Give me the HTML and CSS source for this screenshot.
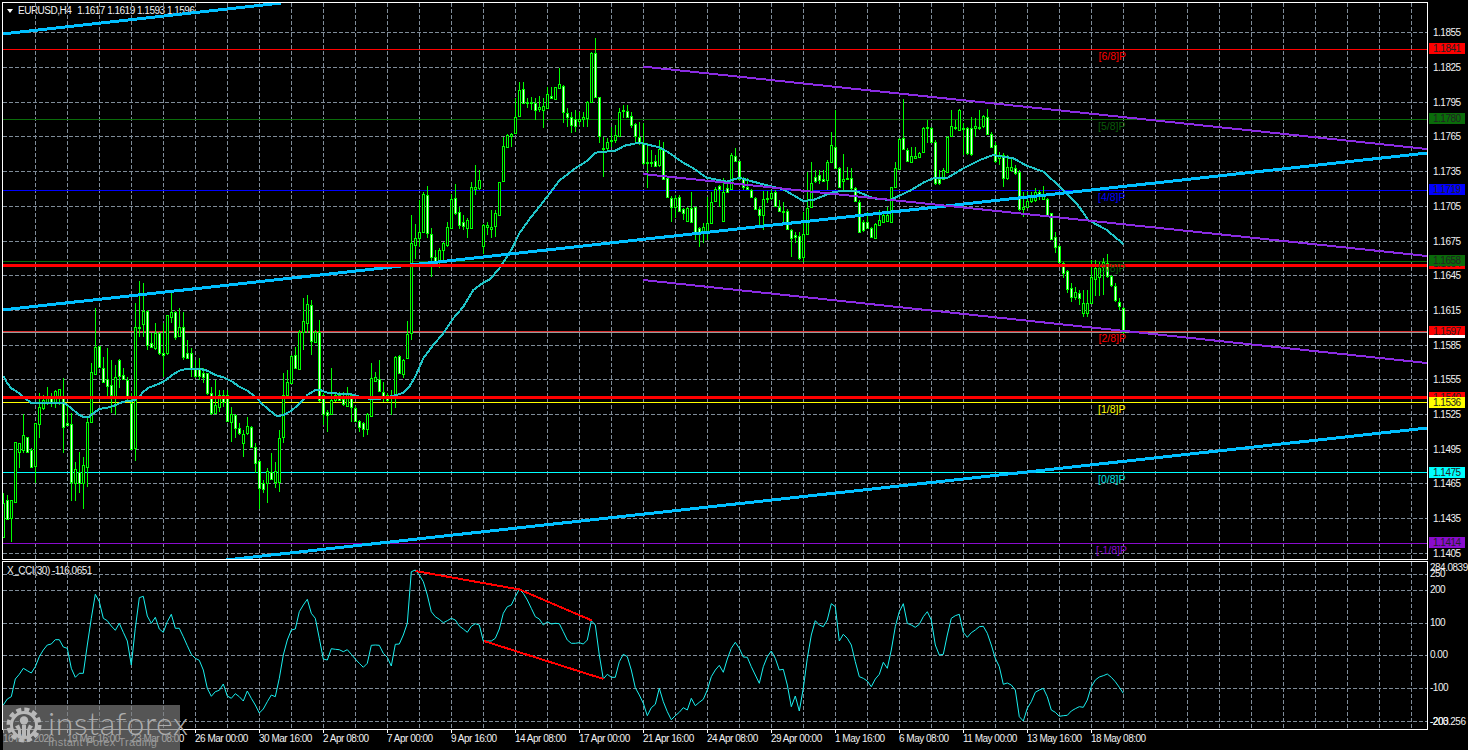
FILE: index.html
```html
<!DOCTYPE html>
<html lang="en">
<head>
<meta charset="utf-8">
<title>EURUSD,H4</title>
<link rel="stylesheet" href="styles.css">
</head>
<body>
<main class="terminal">
  <section class="pane pane-main">
    <div class="plot">
      <div class="caption caption-main"><span class="caret"></span><span>EURUSD,H4</span><span class="ohlc">1.1617 1.1619 1.1593 1.1596</span></div>
      <svg id="price-plot" class="chart" width="1424" height="556" viewBox="3 3 1424 556"></svg>
    </div>
    <div id="price-axis" class="axis"></div>
  </section>
  <section class="pane pane-sub">
    <div class="plot">
      <div class="caption caption-sub">X_CCI(30) -116.0651</div>
      <svg id="cci-plot" class="chart" width="1424" height="167" viewBox="3 562 1424 167"></svg>
    </div>
    <div id="cci-axis" class="axis"></div>
  </section>
  <footer class="time-axis">
    <span>16 Mar 2026</span><span>19 Mar 16:00</span><span>23 Mar 08:00</span><span>26 Mar 00:00</span><span>30 Mar 16:00</span><span>2 Apr 08:00</span><span>7 Apr 00:00</span><span>9 Apr 16:00</span><span>14 Apr 08:00</span><span>17 Apr 00:00</span><span>21 Apr 16:00</span><span>24 Apr 08:00</span><span>29 Apr 00:00</span><span>1 May 16:00</span><span>6 May 08:00</span><span>11 May 00:00</span><span>13 May 16:00</span><span>18 May 08:00</span>
  </footer>
</main>
<aside class="brand">
  <svg class="brand-mark" width="36" height="36" viewBox="0 0 36 36">
    <circle class="gear-teeth" cx="18" cy="18" r="15.5"/>
    <circle class="gear-ring" cx="18" cy="18" r="12.5"/>
    <circle class="gear-core" cx="18" cy="13.5" r="4.2"/>
    <path class="gear-core" d="M16 18h4v13h-4zM9 19.5l4-2 2 5v8h-3v-7zM27 19.5l-4-2-2 5v8h3v-7z"/>
  </svg>
  <div class="brand-text">
    <div class="brand-name">instaforex</div>
    <div class="brand-tag">Instant Forex Trading</div>
  </div>
</aside>
<script src="chart.js"></script>
</body>
</html>
```
FILE: styles.css
```css
* { box-sizing: border-box; }
html, body { margin: 0; height: 100%; }
body {
  position: relative;
  width: 1468px;
  height: 750px;
  overflow: hidden;
  background: #000;
  color: #fff;
  font-family: "Liberation Sans", Arial, sans-serif;
  font-size: 10px;
  letter-spacing: -0.5px;
}
.terminal { display: flex; flex-direction: column; padding: 2px 0 0 2px; }
.pane { display: flex; }
.pane-main { height: 558px; margin-bottom: 1px; }
.pane-sub { height: 169px; }
.plot { position: relative; width: 1426px; border: 1px solid #fff; }
.chart { position: relative; display: block; }
.axis { position: relative; width: 40px; }
.caption { position: absolute; white-space: nowrap; line-height: 12px; color: #f2f2f2; }
.caption-main { left: 3px; top: 2px; display: flex; align-items: center; }
.caption-sub { left: 4px; top: 3px; }
.caret { width: 0; height: 0; margin: 0 5px 0 1px; border-left: 3.5px solid transparent; border-right: 3.5px solid transparent; border-top: 4px solid #fff; }
.ohlc { margin-left: 6px; }
.grid { stroke: #7f8c99; stroke-width: 1; stroke-dasharray: 4 2; }
.level { stroke-width: 1; fill: none; }
.wick { stroke: #00ff00; stroke-width: 1; fill: none; }
.bull { fill: #000; stroke: #00ff00; stroke-width: 1; }
.bear { fill: #e8ffe8; stroke: #00ff00; stroke-width: 1; }
.ma { fill: none; stroke: #20c4c8; stroke-width: 2; }
.trend { fill: none; stroke: #00bfff; stroke-width: 3; }
.channel { fill: none; stroke: #8a2be2; stroke-width: 2; }
.support { stroke: #ff0000; stroke-width: 3; }
.cci { fill: none; stroke: #19f0f0; stroke-width: 1; }
.pattern { fill: none; stroke: #ff0000; stroke-width: 2; }
.mm-label { font-size: 10.5px; letter-spacing: 0; font-family: "Liberation Sans", Arial, sans-serif; }
.tick, .tag { position: absolute; white-space: nowrap; line-height: 12px; }
.tick { left: 5px; color: #f2f2f2; }
.tick-sub { left: 2px; }
.tag { left: 1px; width: 36px; height: 11px; padding-left: 4px; line-height: 11px; color: #222; }
.tag-under { border-bottom: 3px solid #fff; height: 12px; }
.time-axis { display: grid; grid-template-columns: repeat(18, 64px); padding: 2px 0 0 1px; height: 20px; }
.time-axis span { position: relative; padding-top: 1px; line-height: 12px; white-space: nowrap; color: #f2f2f2; }
.time-axis span::before { content: ""; position: absolute; left: 0; top: -2px; width: 1px; height: 3px; background: #fff; }
.brand { position: absolute; left: 3px; top: 705px; width: 177px; height: 45px; display: flex; background: rgba(125, 125, 125, 0.68); }
.brand-mark { flex: none; margin: 2px 0 0 3px; }
.gear-teeth { fill: none; stroke: #b9b9b9; stroke-width: 4; stroke-dasharray: 5 3.1; }
.gear-ring { fill: none; stroke: #b9b9b9; stroke-width: 3; }
.gear-core { fill: #b9b9b9; }
.brand-text { margin-left: 6px; letter-spacing: 0; }
.brand-name { font-family: Lato, "Liberation Sans", sans-serif; font-size: 32px; line-height: 30px; margin-top: 3px; color: #adadad; letter-spacing: 0.6px; font-weight: 300; }
.brand-tag { font-family: "Liberation Sans", Arial, sans-serif; font-size: 11px; line-height: 12px; margin-top: -2px; color: #999; letter-spacing: .25px; white-space: nowrap; }
```
FILE: chart.js
```js
(function () {
  var NS = 'http://www.w3.org/2000/svg';
  function el(parent, name, attrs, text) {
    var n = document.createElementNS(NS, name);
    for (var k in attrs) n.setAttribute(k, attrs[k]);
    if (text) n.textContent = text;
    parent.appendChild(n);
    return n;
  }
  var crisp = 'crispEdges';
  var main = document.getElementById('price-plot');
  var sub = document.getElementById('cci-plot');

  function grid(svg, ys, top, bottom) {
    var d = '';
    for (var i = 0; i < 44; i++) { var x = 35.5 + 32 * i; d += 'M' + x + ' ' + top + 'V' + bottom; }
    ys.forEach(function (y) { d += 'M3 ' + (y + 0.5) + 'H1427'; });
    el(svg, 'path', { 'class': 'grid', d: d, 'shape-rendering': crisp });
  }
  var priceGrid = [32, 67, 102, 136, 171, 206, 241, 275, 310, 345, 379, 414, 449, 483, 518, 553];
  grid(main, priceGrid, 3, 559);
  grid(sub, [574, 590, 623, 655, 688, 721], 562, 729);

  /* Murrey levels */
  [[49, '#ff0000'], [119, '#0a6b0a'], [190, '#0000ff'], [261, '#0a6b0a'], [331, '#d83030'], [332, '#9a9a9a'], [402, '#ffff00'], [472, '#00ffff'], [543, '#8a0ccf']].forEach(function (l) {
    el(main, 'path', { 'class': 'level', d: 'M3 ' + (l[0] + 0.5) + 'H1427', stroke: l[1], 'shape-rendering': crisp });
  });

  /* candles: body top, body bottom, high, low, 1 = bearish; in zoom units */
  var A = [[668,770,640,773,0],[660,717,645,720,1],[660,715,660,785,0],[487,665,485,670,0],[490,515,490,565,0],[466,510,403,520,0],[470,515,470,515,1],[510,560,505,565,1],[430,557,430,610,0],[382,433,340,475,0],[360,385,345,390,0],[348,365,322,375,0],[355,365,340,380,1],[332,365,330,385,0],[328,350,328,375,0],[355,440,295,520,1],[430,435,375,437,1],[433,605,400,662,1],[568,608,545,662,0],[575,610,515,640,1],[556,610,530,687,0],[427,560,410,620,0],[277,425,250,430,0],[202,282,85,285,0],[198,262,198,265,1],[265,307,230,310,1],[298,318,205,350,1],[316,345,240,400,1],[290,350,255,405,0],[240,287,238,325,1],[286,298,265,300,1],[300,355,290,360,1],[370,507,340,510,1],[142,505,70,542,0],[140,142,3,170,0],[92,133,8,170,0],[93,195,90,210,1],[190,200,160,205,1],[158,204,130,210,0],[158,220,155,225,1],[218,225,130,290,1],[105,220,105,225,0],[96,110,40,130,0],[95,172,92,180,1],[142,167,85,170,0],[140,232,95,240,1],[218,235,180,238,1],[220,265,205,290,1],[265,287,240,295,1],[268,288,235,300,1],[278,290,265,310,1],[280,340,278,345,1],[338,400,320,405,1],[376,398,300,400,0],[345,380,330,395,0],[345,365,330,380,1],[345,422,330,425,1],[403,425,380,485,0],[405,445,402,475,1],[443,458,430,465,1],[462,488,450,530,0],[438,460,410,465,0],[442,500,438,505,1],[502,550,488,580,1],[544,625,540,687,1],[610,628,600,640,1],[574,608,565,670,0],[577,597,520,600,1],[573,605,545,625,0],[475,605,450,635,0],[346,472,280,488,0],[307,345,270,348,0],[228,310,225,312,0],[226,263,200,265,1],[155,268,150,270,0],[123,155,55,210,0],[72,130,45,160,0],[75,182,60,225,1],[155,185,150,190,0],[155,360,120,365,1],[345,402,340,435,1],[397,404,390,455,1],[360,402,265,405,0],[345,360,340,365,0],[345,360,335,362,1],[358,372,335,378,1],[340,378,320,382,0],[345,380,338,425,1],[383,423,378,427,1],[423,440,420,455,1],[428,447,425,470,1],[403,447,400,465,0],[295,408,250,410,0],[292,302,275,305,0],[298,332,240,335,1],[335,347,305,365,1],[345,360,340,365,1],[346,352,330,405,0],[232,345,228,385,0],[228,278,225,280,1],[240,282,238,295,0],[162,235,122,238,0],[-111,160,-195,180,0]];
  var B = [[715,735,672,778,0],[697,713,600,740,0],[583,695,575,700,0],[585,698,558,713,1],[703,770,685,830,1],[772,782,750,790,1],[750,780,745,805,0],[730,750,725,790,0],[682,735,665,740,0],[598,685,583,688,0],[595,640,553,645,1],[637,675,620,688,1],[665,678,645,690,1],[660,685,655,713,0],[562,683,547,688,0],[562,567,495,585,0],[540,565,510,570,0],[676,738,672,762,0],[675,682,665,705,0]];
  var C = [[590,596,540,625,0],[548,587,540,620,0],[457,555,455,558,0],[347,452,320,455,0],[315,350,312,352,0],[313,318,310,350,0],[260,310,205,312,0],[180,258,155,262,0],[178,218,155,222,1],[215,218,205,235,0],[215,218,200,240,0],[220,240,205,270,1],[232,236,198,245,0],[228,240,205,293,0],[193,235,170,238,0],[197,203,170,205,1],[172,207,170,210,0],[162,175,115,178,0],[168,245,165,280,1],[248,262,235,290,1],[260,285,245,310,1],[268,287,240,305,1],[268,272,245,285,0],[260,268,245,290,0],[215,263,212,292,0],[70,215,65,220,0],[70,200,25,205,1],[202,317,200,338,1],[355,358,320,442,0],[337,355,325,365,0],[330,332,290,350,0],[316,330,285,340,0],[247,318,235,322,0],[240,244,225,265,0],[243,262,225,265,1],[257,285,245,295,1],[283,318,278,335,1],[320,338,275,345,1],[338,400,278,405,1],[395,397,340,475,0],[395,397,360,410,0],[392,407,375,412,1],[358,405,330,410,0],[358,447,335,450,1],[445,502,440,505,1],[505,530,498,575,1],[505,530,495,565,0],[502,542,495,545,1],[538,548,535,570,1],[535,572,530,575,0],[535,575,487,578,1],[532,607,530,630,1],[595,605,592,650,1],[592,605,580,640,0],[580,607,500,630,0],[515,578,485,582,0],[478,512,470,515,0],[467,478,465,530,1],[487,572,445,575,0],[475,487,460,490,1],[375,478,370,480,0],[378,392,355,395,1],[394,447,392,450,1],[447,472,440,480,1],[470,477,445,480,1],[480,502,478,505,1],[505,537,500,540,1],[537,554,530,585,1],[508,555,482,600,0],[505,508,482,520,0],[490,505,480,510,0],[487,527,480,530,1],[530,542,510,545,1],[542,545,515,575,0],[542,598,538,600,1],[601,625,598,680,1],[616,622,605,640,1],[618,685,605,690,1],[613,682,545,695,0],[533,612,425,615,0],[458,530,395,533,0],[440,452,420,460,1],[436,450,420,462,1],[448,452,420,455,1],[395,450,390,480,0],[346,395,305,398,0],[350,413,240,416,1],[415,472,410,475,1],[448,452,372,480,0],[443,448,410,450,1],[445,475,415,480,1],[473,512,470,515,1],[515,605,510,610,1],[577,600,570,605,1],[575,593,545,595,1],[595,622,590,625,1],[583,625,578,628,0],[570,585,540,588,0],[555,575,550,578,0],[555,573,530,576,0],[472,575,470,580,0],[415,470,395,472,0],[328,417,325,420,0],[325,358,208,360,1],[360,392,355,395,1],[378,395,352,398,0],[378,385,350,388,0],[370,382,365,385,0],[293,365,290,368,0],[290,293,270,340,0],[293,337,290,340,1],[335,460,330,465,1],[447,460,420,465,1],[420,447,415,450,0],[322,425,318,430,0],[287,318,240,320,0],[290,295,270,300,1],[241,300,238,302,0],[295,298,280,375,1],[295,370,292,375,1],[295,373,260,378,1],[287,293,265,320,0],[290,292,240,300,1]];
  var D = [[347,378,345,385,0],[352,403,328,405,1],[402,442,395,445,1],[435,482,425,490,1],[467,475,455,495,0],[465,535,460,560,1],[500,535,465,540,0],[502,510,470,515,0],[505,518,495,525,1],[515,628,510,632,1],[622,628,575,650,0],[603,622,575,625,0],[590,603,575,610,0],[575,600,565,605,0],[575,585,570,600,1],[582,597,558,600,0],[598,645,595,650,1],[640,717,638,720,1],[712,742,695,760,1],[738,787,735,790,1],[790,818,785,835,1],[812,868,810,880,1],[865,890,850,905,1],[875,892,860,900,0],[880,895,870,915,1],[908,940,870,950,0],[910,938,870,952,0],[830,908,780,910,0],[803,838,780,888,0],[803,830,785,888,0],[786,800,775,885,0],[790,828,762,835,1],[828,855,825,860,1],[858,900,850,905,1],[905,918,895,930,1],[925,995,920,1000,1]];

  var wicks = '', bull = '', bear = '', k = 0;
  function addBlock(rows, y0) {
    rows.forEach(function (r) {
      var cx = 3.5 + 4 * k;
      var t = Math.round(y0 + r[0] / 3), b = Math.round(y0 + r[1] / 3);
      var h = Math.round(y0 + r[2] / 3), l = Math.round(y0 + r[3] / 3);
      if (b < t + 1) b = t + 1;
      wicks += 'M' + cx + ' ' + h + 'V' + l;
      var body = 'M' + (cx - 1) + ' ' + (t + 0.5) + 'H' + (cx + 1) + 'V' + (b + 0.5) + 'H' + (cx - 1) + 'Z';
      if (r[4]) bear += body; else bull += body;
      k++;
    });
  }
  addBlock(A, 280); addBlock(B, 0); addBlock(C, 30); addBlock(D, 0);
  el(main, 'path', { 'class': 'wick', d: wicks, 'shape-rendering': crisp });
  el(main, 'path', { 'class': 'bull', d: bull, 'shape-rendering': crisp });
  el(main, 'path', { 'class': 'bear', d: bear, 'shape-rendering': crisp });

  function conv(pts, x0, y0) {
    return pts.map(function (p) { return (x0 + p[0] / 3).toFixed(1) + ',' + (y0 + p[1] / 3).toFixed(1); });
  }
  var ma = conv([[10,287],[22,310],[34,325],[46,332],[58,340],[70,350],[82,360],[94,369],[118,370],[142,369],[166,369],[190,369],[202,375],[214,385],[226,395],[238,405],[250,411],[268,410],[280,400],[298,387],[322,383],[346,376],[370,365],[394,362],[406,360],[418,350],[430,335],[446,323],[470,314],[490,305],[514,287],[538,272],[562,266],[598,266],[622,272],[646,285],[670,292],[694,303],[718,320],[742,332],[766,350],[790,375],[814,395],[830,408],[850,406],[874,392],[898,372],[922,345],[946,330],[960,330],[982,338],[1018,341],[1054,343],[1078,350],[1114,358],[1140,356],[1186,346],[1210,338],[1228,320],[1246,290],[1270,235],[1300,195],[1330,160],[1360,115],[1390,80],[1420,30],[1450,8]], 0, 280)
    .concat(conv([[0,748],[28,715],[64,660],[88,610],[124,560],[160,515],[208,452],[256,415],[292,392],[316,368],[376,362],[404,347],[448,338],[508,352],[532,365],[580,398],[610,415],[650,443],[710,455],[748,443],[790,455],[820,463],[880,478],[940,513],[970,510],[1024,488],[1060,482],[1096,482],[1150,505],[1200,510],[1260,482],[1300,458],[1330,445],[1370,445],[1420,415],[1470,390]], 490, 30))
    .concat(conv([[0,480],[40,465],[100,475],[140,497],[190,515],[240,560],[290,610],[325,660],[380,690],[430,732]], 980, 0));
  el(main, 'polyline', { 'class': 'ma', points: ma.join(' '), 'shape-rendering': crisp });

  [[2, 34, 281, 3], [2, 310, 1427, 153], [226, 560, 1427, 428]].forEach(function (s) {
    el(main, 'line', { 'class': 'trend', x1: s[0], y1: s[1], x2: s[2], y2: s[3], 'shape-rendering': crisp });
  });
  [[643, 66.6, 1427, 149], [643, 174, 1427, 256], [643, 280, 1427, 363]].forEach(function (s) {
    el(main, 'line', { 'class': 'channel', x1: s[0], y1: s[1], x2: s[2], y2: s[3], 'shape-rendering': crisp });
  });
  [265, 397].forEach(function (y) {
    el(main, 'line', { 'class': 'support', x1: 3, y1: y + 0.5, x2: 1427, y2: y + 0.5, 'shape-rendering': crisp });
  });

  [['[6/8]P', 1098.5, 60, '#ff0000'], ['[5/8]P', 1098, 130, '#0a5c0a'], ['[4/8]P', 1098, 201, '#0000ff'], ['[3/8]P', 1098, 272, '#0a5c0a'], ['[2/8]P', 1098.5, 342, '#ff0000'], ['[1/8]P', 1098, 413, '#ffff00'], ['[0/8]P', 1098, 483, '#00e0e0'], ['[-1/8]P', 1096, 554, '#8a0ccf']].forEach(function (m) {
    el(main, 'text', { 'class': 'mm-label', x: m[1], y: m[2], fill: m[3] }, m[0]);
  });

  /* indicator pane */
  var cci = conv([[10,450],[22,432],[34,425],[46,372],[58,358],[70,340],[82,347],[94,354],[106,335],[118,305],[130,285],[142,270],[154,267],[166,254],[178,254],[190,276],[202,280],[214,340],[226,367],[238,355],[250,355],[262,270],[274,190],[286,118],[298,140],[310,190],[322,197],[334,213],[346,226],[358,205],[370,232],[382,258],[394,330],[406,220],[418,128],[430,124],[442,183],[454,205],[466,187],[478,222],[490,232],[502,200],[514,178],[526,220],[538,220],[550,245],[562,272],[574,298],[586,310],[598,316],[610,345],[622,400],[634,424],[646,410],[658,406],[670,387],[682,423],[694,430],[706,416],[718,425],[730,438],[742,408],[754,430],[766,450],[778,474],[790,462],[802,440],[814,420],[826,425],[838,370],[850,300],[862,255],[874,225],[886,222],[898,170],[910,150],[922,133],[934,175],[946,190],[958,250],[970,312],[982,315],[994,281],[1006,283],[1018,284],[1030,290],[1042,284],[1054,298],[1066,312],[1078,325],[1090,337],[1102,325],[1114,271],[1126,270],[1138,271],[1150,295],[1162,307],[1174,333],[1186,268],[1198,267],[1210,240],[1222,205],[1234,50],[1246,45],[1258,60],[1270,80],[1282,120],[1294,170],[1306,185],[1318,193],[1330,203],[1342,197],[1354,190],[1366,195],[1378,213],[1390,222],[1402,232],[1414,214],[1426,206],[1438,210],[1450,258],[1462,258]], 0, 555)
    .concat(conv([[4,258],[16,250],[28,222],[40,175],[52,155],[64,150],[76,125],[88,103],[100,115],[112,135],[124,160],[136,185],[148,192],[160,210],[172,200],[184,207],[196,205],[208,206],[220,230],[232,255],[244,265],[256,265],[268,263],[280,267],[292,255],[304,197],[316,210],[328,300],[340,372],[352,358],[364,367],[376,367],[388,320],[400,298],[412,305],[424,345],[436,398],[448,420],[460,445],[472,482],[484,458],[496,448],[508,400],[520,440],[532,470],[544,494],[556,482],[568,472],[580,458],[592,465],[604,430],[616,452],[628,442],[640,433],[652,405],[664,365],[676,345],[688,331],[700,352],[712,312],[724,280],[736,262],[748,280],[760,306],[772,307],[784,335],[796,360],[808,385],[820,335],[832,305],[844,288],[856,310],[868,345],[880,343],[892,390],[904,455],[916,423],[928,468],[940,400],[952,310],[964,240],[976,197],[988,210],[1000,215],[1012,195],[1024,146],[1036,155],[1048,258],[1060,238],[1072,250],[1084,270],[1096,320],[1108,365],[1120,370],[1132,378],[1144,395],[1156,372],[1168,358],[1180,322],[1192,340],[1204,285],[1216,215],[1228,170],[1240,146],[1252,205],[1264,210],[1276,217],[1288,208],[1300,185],[1312,170],[1324,195],[1336,270],[1348,300],[1360,298],[1372,240],[1384,190],[1396,182],[1408,178],[1420,232],[1432,247],[1444,233],[1456,225],[1468,215]], 490, 555))
    .concat(conv([[10,214],[22,235],[34,270],[46,310],[58,335],[70,388],[82,384],[94,390],[106,405],[118,485],[130,498],[142,460],[154,440],[166,412],[178,405],[190,400],[202,425],[214,465],[226,472],[238,484],[250,482],[262,481],[274,468],[286,461],[298,455],[310,457],[322,435],[334,395],[346,375],[358,366],[370,362],[382,357],[394,367],[406,380],[418,397],[430,415]], 980, 555));
  el(sub, 'polyline', { 'class': 'cci', points: cci.join(' ') });
  el(sub, 'polyline', { 'class': 'pattern', points: '415.5,571 519.5,589.5 592,620.5', 'shape-rendering': crisp });
  el(sub, 'line', { 'class': 'pattern', x1: 484, y1: 641, x2: 603.5, y2: 679, 'shape-rendering': crisp });

  /* axes */
  function label(parent, cls, top, text, bg) {
    var n = document.createElement('div');
    n.className = cls;
    n.style.top = top + 'px';
    if (bg) n.style.backgroundColor = bg;
    n.textContent = text;
    parent.appendChild(n);
  }
  var pa = document.getElementById('price-axis');
  ['1.1855','1.1825','1.1795','1.1765','1.1735','1.1705','1.1675','1.1645','1.1615','1.1585','1.1555','1.1525','1.1495','1.1465','1.1435','1.1405'].forEach(function (t, i) {
    label(pa, 'tick', priceGrid[i] - 2 - 6 + 1, t);
  });
  [[43, '1.1841', '#ff0000', ''], [113, '1.1780', '#0a6b0a', ''], [184, '1.1719', '#0000ff', ''], [258, '1.1654', '#ff0000', ''], [255, '1.1658', '#0a6b0a', ''], [326, '1.1597', '#ff0000', ' tag-under'], [392, '1.1540', '#ff0000', ''], [397, '1.1536', '#ffff00', ''], [467, '1.1475', '#00ffff', ''], [537, '1.1414', '#8a0ccf', '']].forEach(function (g) {
    label(pa, 'tag' + g[3], g[0] - 2, g[1], g[2]);
  });
  var ca = document.getElementById('cci-axis');
  [[568, '284.0839'], [574, '250'], [590, '200'], [623, '100'], [655, '0.00'], [688, '-100'], [722, '-200'], [722, '-203.256']].forEach(function (g) {
    label(ca, 'tick tick-sub', g[0] - 561 - 6, g[1]);
  });
})();
```
